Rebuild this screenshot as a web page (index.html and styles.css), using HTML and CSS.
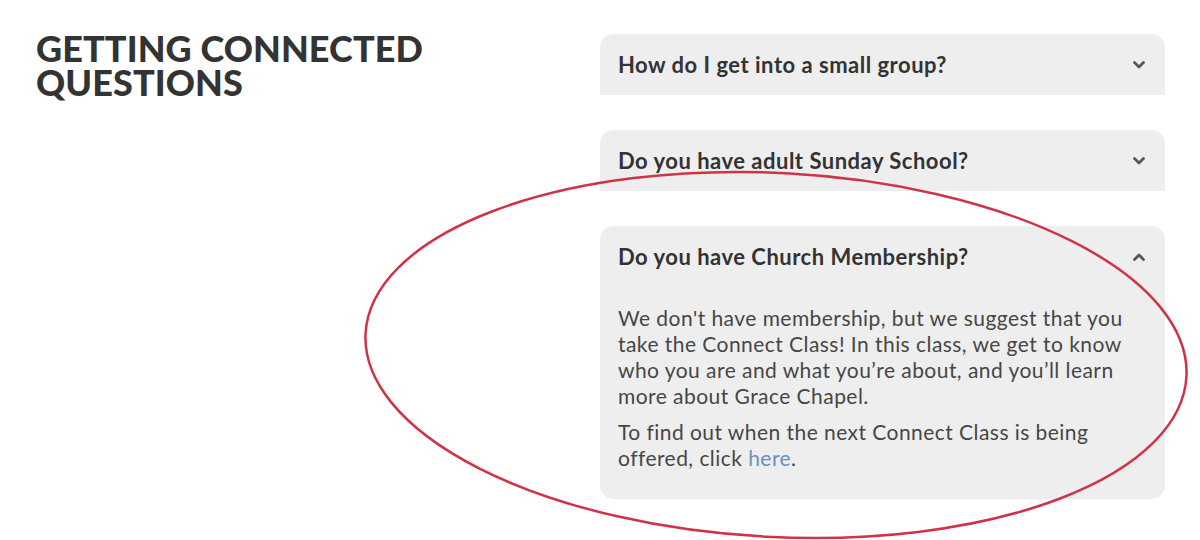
FILE: index.html
```html
<!DOCTYPE html>
<html lang="en">
	<head>
		<link rel="stylesheet" href="styles.css">
	</head>
	<body>
		<main class="page">
			<h1 class="title">GETTING CONNECTED<br>QUESTIONS</h1>
			<div class="faq">
				<section class="item">
					<div class="q">How do I get into a small group?<svg class="chev" viewBox="0 0 12 8"><polyline points="1.5,1.5 6,6 10.5,1.5"/></svg></div>
				</section>
				<section class="item">
					<div class="q">Do you have adult Sunday School?<svg class="chev" viewBox="0 0 12 8"><polyline points="1.5,1.5 6,6 10.5,1.5"/></svg></div>
				</section>
				<section class="item open">
					<div class="q">Do you have Church Membership?<svg class="chev" viewBox="0 0 12 8"><polyline points="1.5,6.5 6,2 10.5,6.5"/></svg></div>
					<div class="a">
						<p>We don't have membership, but we suggest that you take the Connect Class! In this class, we get to know who you are and what you’re about, and you’ll learn more about Grace Chapel.</p>
						<p>To find out when the next Connect Class is being offered, click <a href="#">here</a>.</p>
					</div>
				</section>
			</div>
			<svg class="circle" viewBox="0 0 1200 540"><ellipse cx="776" cy="355" rx="411" ry="182" transform="rotate(3 776 355)"/></svg>
		</main>
	</body>
</html>
```

FILE: styles.css
```css
body { margin:0; background:#fff; font-family:"Lato", "Liberation Sans", sans-serif; color:#333; }

.page { position:relative; width:1200px; height:540px; display:flex; padding:31px 0 0 36px; box-sizing:border-box; }

.title { margin:0; width:564px; font-size:36px; line-height:34px; font-weight:900; color:#333; letter-spacing:0.1px; }

.faq { width:565px; display:flex; flex-direction:column; gap:35px; padding-top:3px; }

.item { background:#eeeeee; border-radius:14px 14px 0 0; }
.item.open { border-radius:14px; padding-bottom:28px; }

.q { height:61px; display:flex; align-items:center; justify-content:space-between; padding:0 18px; font-size:22px; font-weight:700; letter-spacing:0.5px; color:#333; }

.chev { width:12px; height:8px; margin-right:2px; }
.chev polyline { fill:none; stroke:#555; stroke-width:2.8; stroke-linecap:round; stroke-linejoin:round; }

.a { padding:18px 30px 0 18px; font-size:21px; line-height:26px; letter-spacing:0.45px; color:#464646; font-weight:400; }
.a p { margin:0 0 10px; }
.a p:last-child { margin:0; }
.a a { color:#6b90bb; text-decoration:none; }

.circle { position:absolute; left:0; top:0; width:1200px; height:540px; pointer-events:none; }
.circle ellipse { fill:none; stroke:#cf3347; stroke-width:2.5; }
```
